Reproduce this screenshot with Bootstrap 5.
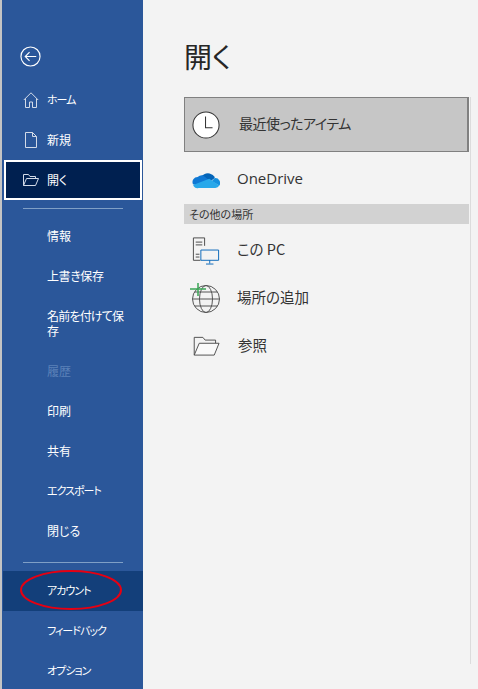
<!DOCTYPE html>
<html lang="ja">
<head>
<meta charset="utf-8">
<title>開く</title>
<link href="https://cdn.jsdelivr.net/npm/bootstrap@5.3.0/dist/css/bootstrap.min.css" rel="stylesheet">
<style>
html,body{height:689px;overflow:hidden;margin:0;background:#f3f3f3}
body{font-family:"Noto Sans CJK JP","Liberation Sans",sans-serif;color:#333;font-feature-settings:"palt"}
.shell{height:689px;width:478px;background:#f3f3f3}
.side{width:143px;height:689px;background:#2b579a;color:#fff;padding-left:1px;border-left:2px solid #c4c4c4;box-sizing:border-box;flex:none;position:relative;font-size:12px}
.backbtn{height:21px;margin-top:46px;margin-left:17px;margin-bottom:13px;flex:none}
.mi{height:40px;padding-left:44px;padding-bottom:2px;display:flex;align-items:center;line-height:15px;color:#fff;flex:none}
.mi.ic{padding-left:20px;gap:8px}
.mi.sel{background:#002050;border:2px solid #fff;margin-left:1px;padding-left:17px;width:138px;gap:8px}
.mi.hot{background:#133f7a}
.mi.two{height:55px}
.mi.off{color:#5b81b8}
.kana{letter-spacing:-1px;font-size:11px}
.tight{letter-spacing:-.4px}
.tighter{letter-spacing:-.8px}
.rule{height:1px;background:#7f9fc6;margin-left:20px;width:100px;flex:none}
.rule-a{margin-top:8px;margin-bottom:7px}
.rule-b{margin-top:11px;margin-bottom:8px}
.ellipse{position:absolute;left:18px;top:570px;width:102px;height:40px;pointer-events:none}
.main{flex:1;position:relative;padding:0 8px 0 41px;min-width:0}
.ttl{font-size:28px;line-height:40px;margin:36px 0 21px;font-weight:400;color:#262626}
.recent{height:55px;width:285px;background:#c6c6c6;border:1px solid #808080;border-right-width:2px;padding-left:7px;gap:19px;font-size:14px;color:#333;letter-spacing:-.5px}
.recent span{margin-top:-2px}
.place{height:48px;width:285px;padding-left:8px;gap:17px;font-size:14.500px;color:#333}
.place-one{height:52px}
.one-txt{font-family:"Open Sans","Liberation Sans",sans-serif;font-size:15px}
.gp{height:20px;width:285px;background:#d2d2d2;font-size:11px;line-height:20px;padding-left:5px;color:#333;margin-bottom:1px}
.sbar{position:absolute;right:7px;top:97px;width:1px;height:567px;background:#dcdcdc}
.ico{flex:none;display:block}
.nudge{margin-top:2px}
.globe{margin-left:-2px}
</style>
</head>
<body>
<div class="shell d-flex">
<nav class="side d-flex flex-column">
  <div class="backbtn">
    <svg class="ico" width="21" height="21" viewBox="0 0 22 22" fill="none" stroke="#fff" stroke-width="1.200"><circle cx="11" cy="11" r="10"/><path d="M17 11H5.500M10 6.500 5.500 11l4.500 4.500"/></svg>
  </div>
  <div class="mi ic">
    <svg class="ico nudge" width="16" height="16" viewBox="0 0 16 16" fill="none" stroke="#d3dbe8" stroke-width="1"><path d="M.8 8 8 .8 15.200 8M2.500 6.500V15.500H6.500V10H9.500V15.500H13.500V6.500"/></svg>
    <span class="kana">ホーム</span>
  </div>
  <div class="mi ic">
    <svg class="ico nudge" width="16" height="16" viewBox="0 0 12 16" fill="none" stroke="#d3dbe8" stroke-width="1"><path d="M.5.500H7.500L11.500 4.500V15.500H.5ZM7.500.500V4.500H11.500"/></svg>
    <span>新規</span>
  </div>
  <div class="mi sel">
    <svg class="ico nudge" width="16" height="12" viewBox="0 0 16 12" fill="none" stroke="#d3dbe8" stroke-width="1"><path d="M.5 11.500V.5H5.500L7 2.500H12.500V4.500M.5 11.500H12.500L15.500 4.500H3.500Z"/></svg>
    <span>開く</span>
  </div>
  <div class="rule rule-a"></div>
  <div class="mi">情報</div>
  <div class="mi tight">上書き保存</div>
  <div class="mi two tighter"><span>名前を付けて保<br>存</span></div>
  <div class="mi off">履歴</div>
  <div class="mi">印刷</div>
  <div class="mi">共有</div>
  <div class="mi kana">エクスポート</div>
  <div class="mi">閉じる</div>
  <div class="rule rule-b"></div>
  <div class="mi hot kana">アカウント</div>
  <div class="mi kana">フィードバック</div>
  <div class="mi kana">オプション</div>
  <svg class="ellipse" viewBox="0 0 102 40" fill="none" stroke="#e60012" stroke-width="2"><ellipse cx="51" cy="20" rx="50" ry="19"/></svg>
</nav>
<main class="main">
  <h1 class="ttl">開く</h1>
  <div class="recent d-flex align-items-center">
    <svg class="ico" width="28" height="28" viewBox="0 0 30 30" fill="#fff" stroke="#333" stroke-width="1.100"><circle cx="15" cy="15" r="14"/><path d="M14.500 6V18H22" fill="none"/></svg>
    <span>最近使ったアイテム</span>
  </div>
  <div class="place place-one d-flex align-items-center">
    <svg class="ico nudge" width="28" height="19" viewBox="0 0 30 20"><path fill="#0364b8" d="M11.500 5.500a8 8 0 0 1 13 3l-7 5-9-4z"/><path fill="#0f78d4" d="M11.500 5.500 20 12l-12 5-7-2A5.500 5.500 0 0 1 6 7.300a7 7 0 0 1 5.500-1.800z"/><path fill="#1490df" d="M24.500 8.500a5.200 5.200 0 0 1 4.800 8L21 12z"/><path fill="#28a8ea" d="M7 19a4.500 4.500 0 0 1-5.800-3L18.500 9.200l10.800 7.300A5 5 0 0 1 25 19z"/></svg>
    <span class="one-txt">OneDrive</span>
  </div>
  <div class="gp">その他の場所</div>
  <div class="place d-flex align-items-center">
    <svg class="ico nudge" width="28" height="29" viewBox="0 0 30 30" fill="none"><path stroke="#444" d="M9 25.500H1.500V1.500H13.500V10M4 6H11M4 9H11M4 19H8M4 22H8"/><path stroke="#0364b8" d="M9.500 14.500H28.500V25.500H9.500ZM19 25.500V29M15 29.500H23"/></svg>
    <span>この PC</span>
  </div>
  <div class="place d-flex align-items-center">
    <svg class="ico nudge globe" width="30" height="30" viewBox="0 0 30 30" fill="none"><g stroke="#555"><circle cx="16" cy="16" r="13.500"/><ellipse cx="16" cy="16" rx="6.500" ry="13.500"/><path d="M2.500 16H29.500M4.500 9H27.500M4.500 23H27.500"/></g><path stroke="#3aa655" stroke-width="1.500" d="M0 6H16M8 0V13"/></svg>
    <span>場所の追加</span>
  </div>
  <div class="place d-flex align-items-center">
    <svg class="ico nudge" width="29" height="20" viewBox="0 0 30 22" fill="none" stroke="#444"><path d="M1.500 21V1.500H11L13.500 4.500H25V8"/><path fill="#fafafa" d="M1.500 21H23.500L28.800 8H7Z"/></svg>
    <span>参照</span>
  </div>
  <div class="sbar"></div>
</main>
</div>
</body>
</html>
